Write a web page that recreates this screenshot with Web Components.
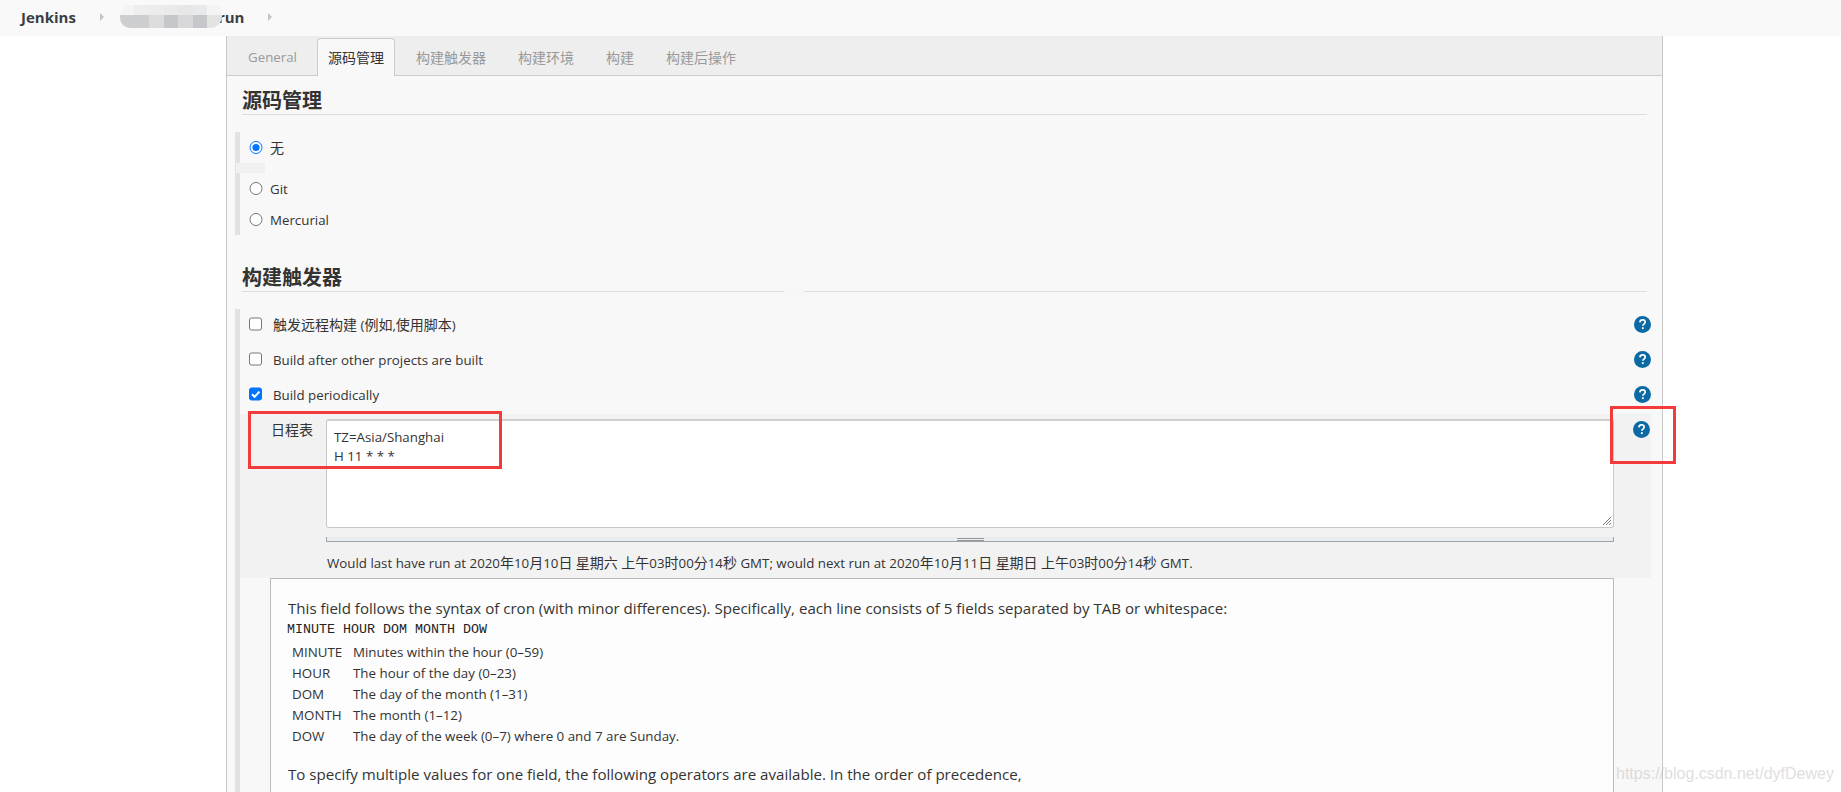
<!DOCTYPE html>
<html>
<head>
<meta charset="utf-8">
<title>Jenkins</title>
<style>
    html, body { margin: 0; padding: 0; height: 792px; overflow: hidden; background: #fff; }
    body { font-family: "Open Sans", "Noto Sans CJK SC", sans-serif; color: #333; }
</style>
</head>
<body>
<jk-breadcrumbs></jk-breadcrumbs>
<jk-config>
    <jk-tabs></jk-tabs>
    <jk-heading>源码管理</jk-heading>
    <jk-section style="padding-bottom: 7px">
        <jk-option type="radio" checked top="6" text="无"></jk-option>
        <jk-option type="radio" top="23" text="Git"></jk-option>
        <jk-option type="radio" top="13" text="Mercurial"></jk-option>
    </jk-section>
    <jk-heading second>构建触发器</jk-heading>
    <jk-section>
        <jk-option type="checkbox" top="6" text="触发远程构建 (例如,使用脚本)" help></jk-option>
        <jk-option type="checkbox" top="17" text="Build after other projects are built" help></jk-option>
        <jk-option type="checkbox" checked top="17" text="Build periodically" help></jk-option>
        <jk-schedule></jk-schedule>
        <jk-help-box></jk-help-box>
    </jk-section>
</jk-config>
<jk-annotations></jk-annotations>

<script>
const FONT = '"Open Sans", "Noto Sans CJK SC", sans-serif';

// latin runs at 13.3px sit next to chinese at 14px in the original
const cjk = (text) => text.replace(/[\u4e00-\u9fff]+/g, (m) => `<span class="c">${m}</span>`);

class JkBreadcrumbs extends HTMLElement {
    constructor() {
        super();
        this.attachShadow({ mode: 'open' });
        const tiles = ['#f4f4f4', '#eeeeee', '#ececec', '#eaeaeb', '#e7e7e8', '#e8e9ea', '#f4f4f4',
                       '#cdced0', '#cdced0', '#dcdcdd', '#c6c7ca', '#d8d8da', '#c6c7ca', '#e3e3e4'];
        this.shadowRoot.innerHTML = `
            <style>
                :host { display: flex; align-items: center; height: 36px; box-sizing: border-box; padding: 0 0 3px 21px; background: #f9f9f9; font: 700 15px ${FONT}; color: #3a3f44; }
                .arrow { width: 0; height: 0; border: 4px solid transparent; border-left: 4px solid #c4c4c4; border-right: 0; margin-left: 24px; }
                .blur { display: grid; grid-template-columns: repeat(7, 1fr); grid-template-rows: 10px 13px; width: 102px; margin-left: 16px; border-radius: 11px 6px 12px 10px; overflow: hidden; position: relative; }
                .run { margin-left: -4px; }
            </style>
            <span>Jenkins</span>
            <span class="arrow"></span>
            <span class="blur">${tiles.map(c => `<i style="background:${c}"></i>`).join('')}</span>
            <span class="run">run</span>
            <span class="arrow"></span>
        `;
    }
}

class JkConfig extends HTMLElement {
    constructor() {
        super();
        this.attachShadow({ mode: 'open' });
        this.shadowRoot.innerHTML = `
            <style>
                :host { display: block; box-sizing: border-box; width: 1437px; height: 756px; margin-left: 226px; background: #f8f8f8; border-left: 1px solid #c8c8c8; border-right: 1px solid #c8c8c8; overflow: hidden; }
            </style>
            <slot></slot>
        `;
    }
}

class JkTabs extends HTMLElement {
    constructor() {
        super();
        this.attachShadow({ mode: 'open' });
        const tabs = ['General', '源码管理', '构建触发器', '构建环境', '构建', '构建后操作'];
        this.shadowRoot.innerHTML = `
            <style>
                :host { display: flex; height: 40px; box-sizing: border-box; background: #eee; border-bottom: 1px solid #ccc; padding: 2px 0 0 10px; font: 14px ${FONT}; color: #999; }
                .tab { padding: 0 10px; line-height: 37px; height: 38px; box-sizing: border-box; border: 1px solid transparent; border-bottom: 0; margin-right: 10px; }
                .tab.latin { font-size: 13.3px; width: 70px; white-space: nowrap; }
                .tab.active { color: #333; background: #f8f8f8; border-color: #ccc; border-radius: 4px 4px 0 0; }
            </style>
            ${tabs.map((t, i) => `<div class="tab${i === 0 ? ' latin' : ''}${i === 1 ? ' active' : ''}">${t}</div>`).join('')}
        `;
    }
}

class JkHeading extends HTMLElement {
    constructor() {
        super();
        this.attachShadow({ mode: 'open' });
        this.shadowRoot.innerHTML = `
            <style>
                :host { display: block; box-sizing: border-box; margin: 13px 15px 17px 15px; height: 26px; font: 700 20px/24px ${FONT}; color: #333; border-bottom: 1px solid #ddd; }
                :host([second]) { margin-top: 31px; }
            </style>
            <slot></slot>
        `;
    }
}

class JkSection extends HTMLElement {
    constructor() {
        super();
        this.attachShadow({ mode: 'open' });
        this.shadowRoot.innerHTML = `
            <style>
                :host { display: flow-root; margin-left: 8px; border-left: 5px solid #e2e2e2; font: 13.3px ${FONT}; }
            </style>
            <slot></slot>
        `;
    }
}

class JkOption extends HTMLElement {
    constructor() {
        super();
        this.attachShadow({ mode: 'open' });
        const type = this.getAttribute('type');
        const checked = this.hasAttribute('checked');
        this.shadowRoot.innerHTML = `
            <style>
                :host { display: flex; align-items: center; height: 18px; margin-top: ${this.getAttribute('top')}px; padding-left: 9px; color: #333; font-size: 13.3px; line-height: 18px; }
                .c { font-size: 14px; }
                svg.box { width: 15px; height: 15px; flex: none; }
                .text { margin-left: ${type === 'radio' ? 6 : 9}px; padding-top: 2px; white-space: nowrap; }
                jk-help-icon { margin-left: auto; margin-right: 11px; }
            </style>
            ${type === 'radio'
                ? `<svg class="box" viewBox="0 0 15 15"><circle cx="7" cy="7.5" r="6" fill="#fff" stroke="${checked ? '#0075ff' : '#767676'}"/>${checked ? '<circle cx="7" cy="7.5" r="3.6" fill="#0075ff"/>' : ''}</svg>`
                : `<svg class="box" viewBox="0 0 15 15"><rect x=".5" y="1" width="12" height="12" rx="2" fill="${checked ? '#0075ff' : '#fff'}" stroke="${checked ? '#0075ff' : '#767676'}"/>${checked ? '<path d="M3 7.2l2.6 2.6 4.8-5.2" fill="none" stroke="#fff" stroke-width="2"/>' : ''}</svg>`}
            <span class="text">${cjk(this.getAttribute('text'))}</span>
            ${this.hasAttribute('help') ? '<jk-help-icon></jk-help-icon>' : ''}
        `;
    }
}

class JkHelpIcon extends HTMLElement {
    constructor() {
        super();
        this.attachShadow({ mode: 'open' });
        this.shadowRoot.innerHTML = `
            <style>
                :host { display: block; width: 17px; height: 17px; flex: none; }
                svg { display: block; }
            </style>
            <svg width="17" height="17" viewBox="0 0 17 17">
                <circle cx="8.5" cy="8.5" r="8.5" fill="#0b69a3"/>
                <path d="M5.9 6.4c.1-1.6 1.2-2.5 2.7-2.5s2.6.9 2.6 2.2c0 1.1-.7 1.6-1.4 2.1-.6.4-.9.8-.9 1.5" fill="none" stroke="#fff" stroke-width="1.7"/>
                <rect x="7.9" y="11.2" width="1.8" height="1.9" fill="#fff"/>
            </svg>
        `;
    }
}

class JkSchedule extends HTMLElement {
    constructor() {
        super();
        this.attachShadow({ mode: 'open' });
        this.shadowRoot.innerHTML = `
            <style>
                :host { display: block; position: relative; box-sizing: border-box; height: 164px; margin: 11px 11px 0 0; background: #f2f2f2; }
                .c { font-size: 14px; }
                .row { display: flex; padding-top: 5px; }
                .label { width: 86px; flex: none; padding: 1px 0 0 31px; box-sizing: border-box; font-size: 14px; line-height: 20px; }
                .area { width: 1288px; height: 109px; box-sizing: border-box; flex: none; background: #fff; border: 1px solid #c8c8c8; border-top: 2px solid #d0d0d0; border-radius: 3px; padding: 7px 7px; font-size: 13.3px; line-height: 18.6px; position: relative; }
                .resize { position: absolute; right: 1px; bottom: 1px; }
                .grip { margin: 9px 0 0 86px; width: 1288px; height: 5px; box-sizing: border-box; background: #e9edef; border: 1px solid #9aa5ad; border-top: 0; display: flex; justify-content: center; }
                .grip i { width: 27px; height: 3px; margin-top: 1px; border-top: 1px solid #999; border-bottom: 1px solid #999; box-sizing: border-box; }
                .msg { margin: 12px 0 0 87px; font-size: 13.3px; line-height: 18px; white-space: nowrap; }
                jk-help-icon { position: absolute; top: 7px; right: 1px; }
            </style>
            <div class="row">
                <div class="label">日程表</div>
                <div class="area">TZ=Asia/Shanghai<br>H 11 * * *
                    <svg class="resize" width="10" height="10" viewBox="0 0 10 10"><path d="M9 1L1 9M9 4L4 9M9 7L7 9" stroke="#777" stroke-width="1"/></svg>
                </div>
            </div>
            <div class="grip"><i></i></div>
            <div class="msg">${cjk('Would last have run at 2020年10月10日 星期六 上午03时00分14秒 GMT; would next run at 2020年10月11日 星期日 上午03时00分14秒 GMT.')}</div>
            <jk-help-icon></jk-help-icon>
        `;
    }
}

class JkHelpBox extends HTMLElement {
    constructor() {
        super();
        this.attachShadow({ mode: 'open' });
        const rows = [
            ['MINUTE', 'Minutes within the hour (0–59)'],
            ['HOUR', 'The hour of the day (0–23)'],
            ['DOM', 'The day of the month (1–31)'],
            ['MONTH', 'The month (1–12)'],
            ['DOW', 'The day of the week (0–7) where 0 and 7 are Sunday.'],
        ];
        this.shadowRoot.innerHTML = `
            <style>
                :host { display: block; box-sizing: border-box; width: 1344px; height: 230px; margin-left: 30px; background: #fdfdfd; border: 1px solid #bbb; padding: 19px 17px; font-size: 15.1px; line-height: 20px; }
                p { margin: 0; white-space: nowrap; }
                pre { margin: 2px 0 0 -1px; font: 13.33px/20px "Liberation Mono", monospace; color: #222; }
                .grid { display: grid; grid-template-columns: 61px 1fr; grid-auto-rows: 21px; align-items: center; padding-left: 4px; margin-top: 1px; font-size: 13.35px; }
                .last { margin-top: 18px; }
            </style>
            <p>This field follows the syntax of cron (with minor differences). Specifically, each line consists of 5 fields separated by TAB or whitespace:</p>
            <pre>MINUTE HOUR DOM MONTH DOW</pre>
            <div class="grid">${rows.map(r => `<span>${r[0]}</span><span>${r[1]}</span>`).join('')}</div>
            <p class="last">To specify multiple values for one field, the following operators are available. In the order of precedence,</p>
        `;
    }
}

// red boxes, smudges and the csdn watermark lie over the screenshot
class JkAnnotations extends HTMLElement {
    constructor() {
        super();
        this.attachShadow({ mode: 'open' });
        this.shadowRoot.innerHTML = `
            <style>
                :host { display: block; position: absolute; left: 0; top: 0; width: 1841px; height: 792px; pointer-events: none; }
                .red { position: absolute; box-sizing: border-box; border: 3px solid #f33b3b; }
                .smudge { position: absolute; background: #f0f0f0; }
                .mark { position: absolute; left: 1616px; top: 764px; font: 16px/20px "Liberation Sans", sans-serif; color: rgba(190,190,190,.5); white-space: nowrap; }
            </style>
            <div class="smudge" style="left:236px;top:163px;width:29px;height:10px"></div>
            <div class="smudge" style="left:784px;top:284px;width:20px;height:16px;border-radius:8px;background:#f7f7f7"></div>
            <div class="red" style="left:248px;top:411px;width:254px;height:58px"></div>
            <div class="red" style="left:1610px;top:406px;width:66px;height:58px"></div>
            <div class="mark">https://blog.csdn.net/dyfDewey</div>
        `;
    }
}

customElements.define('jk-breadcrumbs', JkBreadcrumbs);
customElements.define('jk-config', JkConfig);
customElements.define('jk-tabs', JkTabs);
customElements.define('jk-heading', JkHeading);
customElements.define('jk-section', JkSection);
customElements.define('jk-help-icon', JkHelpIcon);
customElements.define('jk-option', JkOption);
customElements.define('jk-schedule', JkSchedule);
customElements.define('jk-help-box', JkHelpBox);
customElements.define('jk-annotations', JkAnnotations);
</script>
</body>
</html>
